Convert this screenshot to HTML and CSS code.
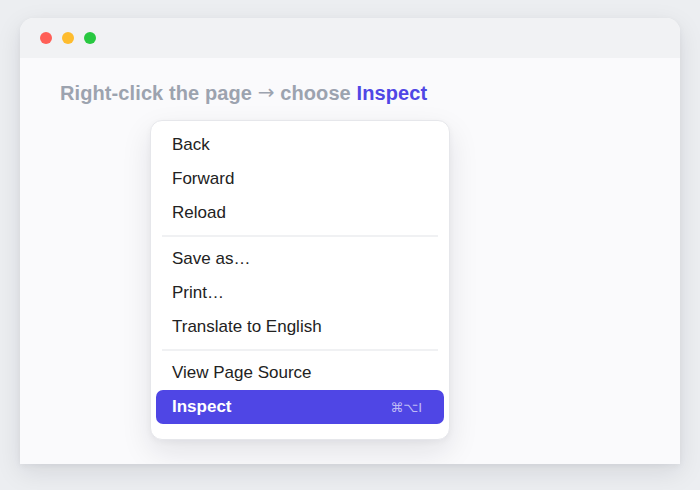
FILE: index.html
```html
<!DOCTYPE html>
<html lang="en">
<head>
<meta charset="utf-8">
<title>Inspect</title>
<link rel="stylesheet" href="styles.css">
</head>
<body>
<div class="stage">
  <div class="window">
    <div class="titlebar">
      <span class="dot red"></span>
      <span class="dot yellow"></span>
      <span class="dot green"></span>
    </div>
    <div class="content">
      <p class="hint">Right-click the page <span class="arrow">→</span> choose <span class="accent">Inspect</span></p>
      <div class="menu">
        <div class="item">Back</div>
        <div class="item">Forward</div>
        <div class="item">Reload</div>
        <div class="sep"></div>
        <div class="item">Save as…</div>
        <div class="item">Print…</div>
        <div class="item">Translate to English</div>
        <div class="sep"></div>
        <div class="item">View Page Source</div>
        <div class="item active"><span>Inspect</span><span class="kbd">⌘⌥I</span></div>
      </div>
    </div>
  </div>
</div>
</body>
</html>
```
FILE: styles.css
```css
* { box-sizing: border-box; }
html, body {
  margin: 0;
  padding: 0;
  width: 700px;
  height: 490px;
  overflow: hidden;
  background: #eceef1;
  font-family: "Liberation Sans", Arial, sans-serif;
}
.stage {
  padding: 18px 20px 0;
}
.window {
  height: 446px;
  border-radius: 14px 14px 0 0;
  background: #fafafc;
  box-shadow: 0 8px 26px rgba(20, 24, 40, 0.10), 0 2px 6px rgba(20, 24, 40, 0.05);
  overflow: hidden;
}
.titlebar {
  height: 40px;
  background: #f1f2f4;
  display: flex;
  align-items: center;
  gap: 10px;
  padding-left: 20px;
}
.dot {
  width: 12px;
  height: 12px;
  border-radius: 50%;
}
.red { background: #ff5f57; }
.yellow { background: #febc2e; }
.green { background: #28c840; }
.content {
  padding: 24px 0 0 130px;
}
.hint {
  height: 22px;
  margin: 0 0 16px -90px;
  font-size: 20px;
  line-height: 22px;
  font-weight: bold;
  color: #9ca3af;
  letter-spacing: 0.1px;
}
.arrow {
  font-family: "DejaVu Sans", sans-serif;
  font-size: 20px;
  line-height: 1;
  font-weight: normal;
  position: relative;
  top: -1px;
}
.accent { color: #4f46e5; }
.menu {
  width: 300px;
  background: #fff;
  border: 1px solid #e6e7eb;
  border-radius: 12px;
  padding: 7px 5px 15px;
  box-shadow: 0 12px 30px rgba(20, 24, 40, 0.10), 0 2px 6px rgba(20, 24, 40, 0.04);
}
.item {
  height: 34px;
  display: flex;
  align-items: center;
  justify-content: space-between;
  padding: 0 22px 0 16px;
  font-size: 17px;
  color: #222;
  border-radius: 7px;
}
.item.active {
  background: #4f46e5;
  color: #fff;
  font-weight: bold;
}
.kbd {
  font-size: 13px;
  font-weight: normal;
  color: rgba(255, 255, 255, 0.65);
  font-family: "DejaVu Sans", sans-serif;
}
.sep {
  height: 2px;
  background: #f0f1f3;
  margin: 5px 6px 5px;
}
```
